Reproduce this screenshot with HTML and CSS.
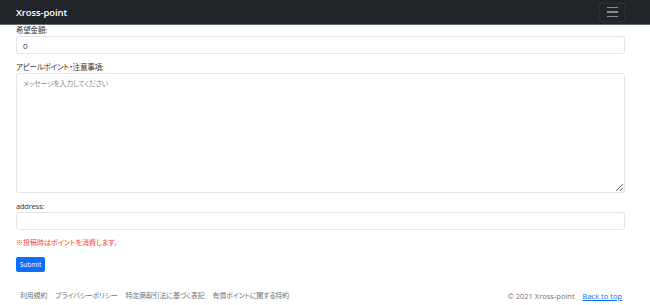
FILE: index.html
```html
<!DOCTYPE html>
<html lang="ja">
<head>
    <meta charset="UTF-8">
    <meta name="viewport" content="width=device-width, initial-scale=1.0">
    <title>Xross-point</title>
    <link rel="stylesheet" href="styles.css">
</head>
<body>
    <nav class="navbar">
        <div class="navbar-inner">
            <a href="#" class="brand">Xross-point</a>
            <button type="button" class="toggler" aria-label="menu">
                <span class="toggler-line"></span>
                <span class="toggler-line"></span>
                <span class="toggler-line"></span>
            </button>
        </div>
    </nav>

    <div class="container">
        <form class="post-form">
            <div class="form-group">
                <label for="amount">希望金額:</label>
                <input type="text" id="amount" class="form-control" value="0">
            </div>

            <div class="form-group">
                <label for="message">アピールポイント・注意事項:</label>
                <textarea id="message" class="form-control textarea" placeholder="メッセージを入力してください"></textarea>
            </div>

            <div class="form-group">
                <label for="address">address:</label>
                <input type="text" id="address" class="form-control">
            </div>

            <p class="notice">※投稿時はポイントを消費します。</p>

            <button type="submit" class="submit-button">Submit</button>
        </form>

        <footer class="footer">
            <div class="footer-links">
                <a href="#">利用規約</a>
                <a href="#">プライバシーポリシー</a>
                <a href="#">特定商取引法に基づく表記</a>
                <a href="#">有償ポイントに関する特約</a>
            </div>
            <div class="footer-right">
                <span class="copy">© 2021 Xross-point</span>
                <a href="#" class="back-top">Back to top</a>
            </div>
        </footer>
    </div>
</body>
</html>
```

FILE: styles.css
```css
* {
    margin: 0;
    padding: 0;
    box-sizing: border-box;
    font-family: 'Open Sans', 'Noto Sans CJK JP', sans-serif;
    font-feature-settings: "palt";
}

body {
    background-color: #fff;
    color: #333;
}

.navbar {
    background: #212529;
    border-bottom: 1px solid #6a6d70;
    height: 25px;
}

.navbar-inner {
    display: flex;
    align-items: center;
    justify-content: space-between;
    height: 100%;
    margin-left: 16px;
    width: 609px;
}

.brand {
    color: #fff;
    text-decoration: none;
    font-size: 9.5px;
    font-weight: 600;
    letter-spacing: -0.1px;
}

.toggler {
    width: 26px;
    height: 19px;
    background: none;
    border: 1px solid #2c3034;
    border-radius: 2px;
    display: flex;
    flex-direction: column;
    align-items: center;
    justify-content: center;
    gap: 3px;
}

.toggler-line {
    display: block;
    width: 11px;
    height: 1.5px;
    background: #8a8d90;
}

.container {
    margin-left: 16px;
    width: 609px;
}

.form-group {
    margin-bottom: 8px;
}

.form-group label {
    display: block;
    font-size: 7.5px;
    letter-spacing: -0.2px;
    line-height: 10px;
    margin-bottom: 1px;
    color: #333;
}

.form-control {
    display: block;
    width: 100%;
    height: 18px;
    padding: 0 6px;
    border: 1px solid #e3e5e8;
    border-radius: 3px;
    font-size: 8px;
    color: #333;
    background: #fff;
}

.form-control:focus {
    outline: none;
}

.textarea {
    height: 120px;
    padding: 4px 6px;
    font-size: 7px;
    letter-spacing: -0.3px;
    resize: vertical;
}

.textarea::placeholder {
    color: #8a8a8a;
}

.notice {
    margin-top: 7px;
    font-size: 7px;
    line-height: 10px;
    color: #ff3b3b;
}

.submit-button {
    margin-top: 9px;
    width: 29px;
    height: 15px;
    background: #0d6efd;
    color: #fff;
    border: none;
    border-radius: 2px;
    font-size: 6.5px;
    cursor: pointer;
}

.footer {
    margin-top: 19px;
    display: flex;
    justify-content: space-between;
    align-items: center;
    font-size: 7.5px;
    line-height: 10px;
}

.footer-links {
    display: flex;
    gap: 8px;
    padding-left: 4px;
    font-size: 7px;
    letter-spacing: -0.2px;
}

.footer-links a {
    color: #6c757d;
    text-decoration: none;
}

.footer-right {
    display: flex;
    gap: 8px;
    padding-right: 3px;
}

.copy {
    color: #6c757d;
}

.back-top {
    color: #0d6efd;
}
```
